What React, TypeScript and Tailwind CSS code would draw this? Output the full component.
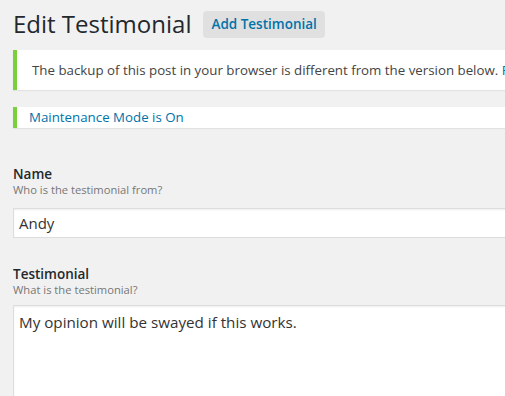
export default function App() {
  return (
    <div
      className="h-[396px] w-[505px] overflow-hidden bg-[#f1f1f1] pl-[13px] text-[#444]"
      style={{ fontFamily: '"Open Sans", sans-serif' }}
    >
      <div className="flex items-center gap-3 pt-[7px]">
        <h1 className="text-[24px] leading-[34px] font-normal text-[#23282d]">Edit Testimonial</h1>
        <span className="rounded-sm bg-[#e0e0e0] px-2 py-[4px] text-[13.5px] leading-[19px] font-semibold text-[#0073aa]">
          Add Testimonial
        </span>
      </div>

      <div className="mt-[9px] w-[600px] border-l-4 border-[#7ad03a] bg-white py-[11px] pl-[15px] text-[13.3px] leading-[18px] whitespace-nowrap text-[#444] shadow-[0_1px_1px_rgba(0,0,0,0.06)]">
        The backup of this post in your browser is different from the version below.{" "}
        <span className="text-[#0073aa]">Restore</span>
      </div>

      <div className="mt-[17px] w-[600px] border-l-4 border-[#7ad03a] bg-white py-[1px] pl-[12px] text-[13.3px] leading-[19px] text-[#0073aa] shadow-[0_1px_1px_rgba(0,0,0,0.06)]">
        Maintenance Mode is On
      </div>

      <div className="mt-[39px]">
        <div className="text-[13.5px] leading-[15px] font-semibold text-[#23282d]">Name</div>
        <div className="text-[11.2px] leading-[16px] text-[#777]">Who is the testimonial from?</div>
        <div className="mt-[10px] h-[30px] w-[600px] border border-[#ddd] bg-white pl-[5px] text-[15px] leading-[28px] text-[#333] shadow-[inset_0_1px_2px_rgba(0,0,0,0.07)]">
          Andy
        </div>
      </div>

      <div className="mt-[29px]">
        <div className="text-[13.5px] leading-[15px] font-semibold text-[#23282d]">Testimonial</div>
        <div className="text-[11.2px] leading-[16px] text-[#777]">What is the testimonial?</div>
        <div className="mt-[7px] h-[120px] w-[600px] border border-[#ddd] bg-white px-[5px] pt-[5px] text-[15.2px] leading-[22px] text-[#333] shadow-[inset_0_1px_2px_rgba(0,0,0,0.07)]">
          My opinion will be swayed if this works.
        </div>
      </div>
    </div>
  )
}
